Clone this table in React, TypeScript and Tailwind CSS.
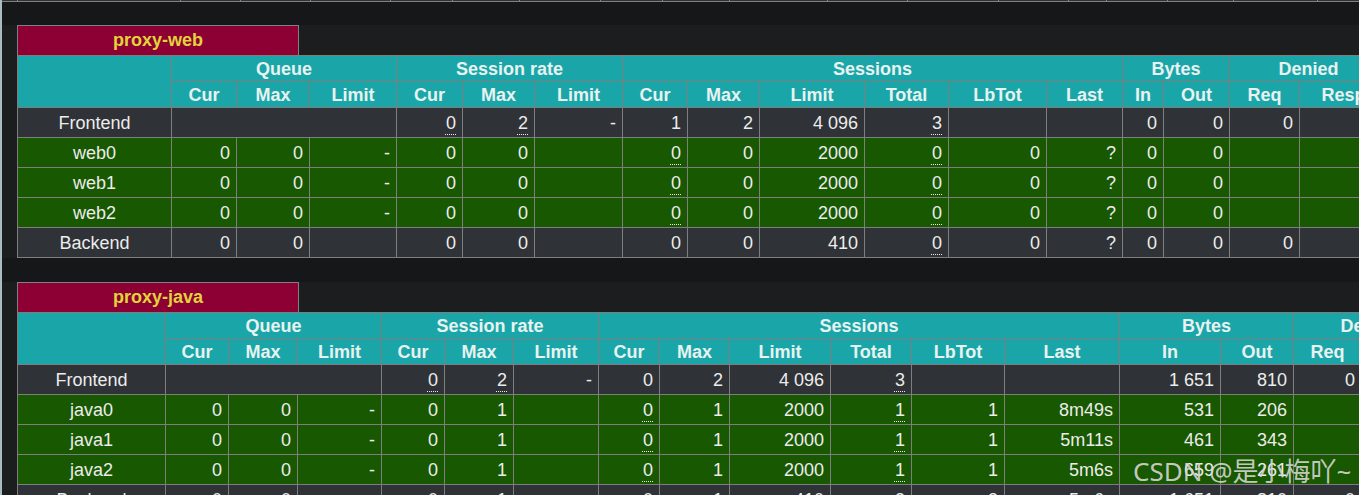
import React from "react";

type C = { v?: string; u?: boolean; span?: number };
type Row = { kind: "fe" | "srv" | "be"; name: string; cells: C[] };

const c = (v?: string, u?: boolean, span?: number): C => ({ v, u, span });

const t1cols = [
  "w-[154px]", "w-[65px]", "w-[73px]", "w-[87px]", "w-[66px]", "w-[72px]", "w-[88px]",
  "w-[65px]", "w-[72px]", "w-[105px]", "w-[84px]", "w-[98px]", "w-[76px]", "w-[41px]",
  "w-[66px]", "w-[70px]", "w-[88px]", "w-[70px]", "w-[70px]", "w-[70px]",
];
const t2cols = [
  "w-[148px]", "w-[63px]", "w-[69px]", "w-[84px]", "w-[63px]", "w-[69px]", "w-[85px]",
  "w-[61px]", "w-[70px]", "w-[101px]", "w-[81px]", "w-[93px]", "w-[115px]", "w-[101px]",
  "w-[73px]", "w-[68px]", "w-[86px]", "w-[70px]", "w-[70px]", "w-[70px]",
];

const web: Row[] = [
  {
    kind: "fe",
    name: "Frontend",
    cells: [c("", false, 3), c("0", true), c("2", true), c("-"), c("1"), c("2"), c("4 096"), c("3", true), c(""), c(""), c("0"), c("0"), c("0"), c(""), c(""), c(""), c("")],
  },
  ...["web0", "web1", "web2"].map((n) => ({
    kind: "srv" as const,
    name: n,
    cells: [c("0"), c("0"), c("-"), c("0"), c("0"), c(""), c("0", true), c("0"), c("2000"), c("0", true), c("0"), c("?"), c("0"), c("0"), c(""), c(""), c(""), c(""), c("")],
  })),
  {
    kind: "be",
    name: "Backend",
    cells: [c("0"), c("0"), c(""), c("0"), c("0"), c(""), c("0"), c("0"), c("410"), c("0", true), c("0"), c("?"), c("0"), c("0"), c("0"), c(""), c(""), c(""), c("")],
  },
];

const java: Row[] = [
  {
    kind: "fe",
    name: "Frontend",
    cells: [c("", false, 3), c("0", true), c("2", true), c("-"), c("0"), c("2"), c("4 096"), c("3", true), c(""), c(""), c("1 651"), c("810"), c("0"), c(""), c(""), c(""), c("")],
  },
  {
    kind: "srv",
    name: "java0",
    cells: [c("0"), c("0"), c("-"), c("0"), c("1"), c(""), c("0", true), c("1"), c("2000"), c("1", true), c("1"), c("8m49s"), c("531"), c("206"), c(""), c(""), c(""), c(""), c("")],
  },
  {
    kind: "srv",
    name: "java1",
    cells: [c("0"), c("0"), c("-"), c("0"), c("1"), c(""), c("0", true), c("1"), c("2000"), c("1", true), c("1"), c("5m11s"), c("461"), c("343"), c(""), c(""), c(""), c(""), c("")],
  },
  {
    kind: "srv",
    name: "java2",
    cells: [c("0"), c("0"), c("-"), c("0"), c("1"), c(""), c("0", true), c("1"), c("2000"), c("1", true), c("1"), c("5m6s"), c("659"), c("261"), c(""), c(""), c(""), c(""), c("")],
  },
  {
    kind: "be",
    name: "Backend",
    cells: [c("0"), c("0"), c(""), c("0"), c("1"), c(""), c("0"), c("1"), c("410"), c("3", true), c("3"), c("5m6s"), c("1 651"), c("810"), c("0"), c(""), c(""), c(""), c("")],
  },
];

const groups: [string, number][] = [
  ["Queue", 3],
  ["Session rate", 3],
  ["Sessions", 6],
  ["Bytes", 2],
  ["Denied", 2],
  ["Errors", 3],
];
const subs = ["Cur", "Max", "Limit", "Cur", "Max", "Limit", "Cur", "Max", "Limit", "Total", "LbTot", "Last", "In", "Out", "Req", "Resp", "Req", "Conn", "Resp"];

function Proxy({ title, cols, rows }: { title: string; cols: string[]; rows: Row[] }) {
  return (
    <div className="bg-[#1c1d1f] pl-[17px]">
      <div className="w-[282px] h-[30px] border border-[#808080] border-b-0 bg-[#8d0033] flex items-center justify-center font-bold text-[18px] text-[#e2d33c]">
        {title}
      </div>
      <table className="table-fixed border-collapse w-max">
        <colgroup>
          {cols.map((w, i) => (
            <col key={i} className={w} />
          ))}
        </colgroup>
        <thead>
          <tr className="h-[26px]">
            <th rowSpan={2} className="border border-[#7e7e7e] bg-[#1aa6a8]"></th>
            {groups.map(([g, n]) => (
              <th key={g} colSpan={n} className="border border-[#7e7e7e] bg-[#1aa6a8] text-[#e8f2f0] font-bold text-center leading-none p-0">
                {g}
              </th>
            ))}
          </tr>
          <tr className="h-[26px]">
            {subs.map((s, i) => (
              <th key={i} className="border border-[#7e7e7e] bg-[#1aa6a8] text-[#e8f2f0] font-bold text-center leading-none p-0 whitespace-nowrap">
                {s}
              </th>
            ))}
          </tr>
        </thead>
        <tbody>
          {rows.map((r, ri) => (
            <tr key={ri} className={r.kind === "srv" ? "h-[30px] bg-[#185800]" : "h-[30px] bg-[#2f3236]"}>
              <td className="border border-[#7e7e7e] text-center text-[#ececec] p-0 leading-none">{r.name}</td>
              {r.cells.map((cell, ci) => (
                <td
                  key={ci}
                  colSpan={cell.span}
                  className="border border-[#7e7e7e] text-right pr-[6px] pl-0 py-0 text-[#ececec] leading-none whitespace-nowrap"
                >
                  {cell.u ? (
                    <span className="underline decoration-dotted decoration-[1px] underline-offset-[5px]">{cell.v}</span>
                  ) : (
                    cell.v
                  )}
                </td>
              ))}
            </tr>
          ))}
        </tbody>
      </table>
    </div>
  );
}

const topCells = ["w-[163px]", "w-[60px]", "w-[70px]", "w-[80px]", "w-[62px]", "w-[67px]", "w-[81px]", "w-[62px]", "w-[67px]", "w-[98px]", "w-[80px]", "w-[91px]", "w-[70px]", "w-[38px]", "w-[61px]", "w-[66px]", "w-[84px]", "w-[80px]"];

export default function App() {
  return (
    <div
      className="w-[1359px] h-[495px] overflow-hidden bg-[#161719] border-l-[2px] border-[#a9bcc0] relative text-[18px]"
      style={{ fontFamily: '"Liberation Sans", Arial, sans-serif' }}
    >
      <div className="flex h-[2px] pl-[15px] bg-[#2f3236] border-b border-[#808080]">
        {topCells.map((w, i) => (
          <div key={i} className={`${w} shrink-0 border-l border-[#808080]`}></div>
        ))}
      </div>
      <div className="h-[23px]"></div>
      <div className="-ml-[2px]">
        <Proxy title="proxy-web" cols={t1cols} rows={web} />
        <div className="h-[24px] bg-[#161719]"></div>
        <Proxy title="proxy-java" cols={t2cols} rows={java} />
      </div>
      <div
        className="absolute left-[1131px] top-[452px] text-[26px] text-[#d8d8d8]/90 whitespace-nowrap"
        style={{ fontFamily: '"Noto Sans", "Noto Sans CJK SC", sans-serif' }}
      >
        CSDN @是小梅吖~
      </div>
    </div>
  );
}
